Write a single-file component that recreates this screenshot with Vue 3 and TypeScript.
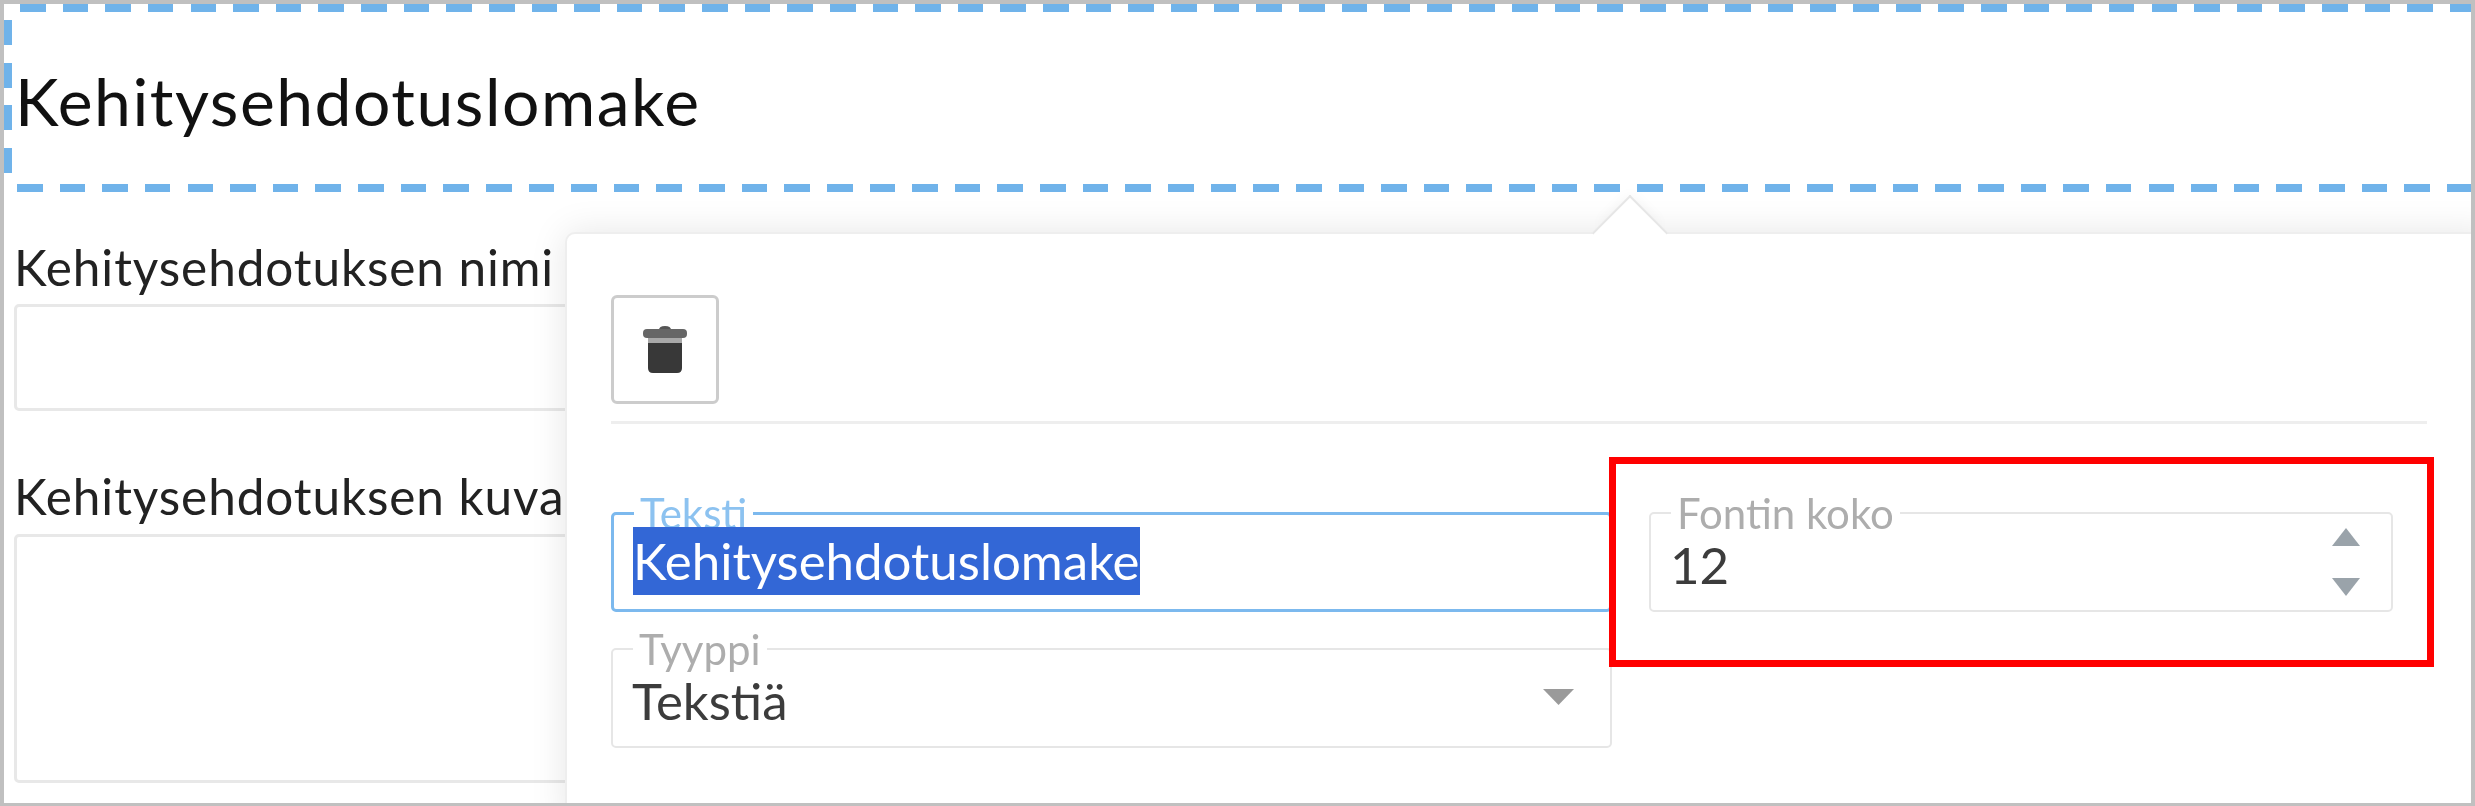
<script setup lang="ts">
const title: string = 'Kehitysehdotuslomake'
</script>

<template>
  <div class="shot">
    <header class="banner"><h1>{{ title }}</h1></header>
    <main class="form">
      <label class="q q-name">Kehitysehdotuksen nimi</label>
      <div class="box box-name"></div>
      <label class="q q-desc">Kehitysehdotuksen kuvaus</label>
      <div class="box box-desc"></div>
    </main>

    <section class="pop">
      <span class="caret"></span>
      <div class="tools">
        <button class="del" type="button" aria-label="Poista">
          <svg width="44" height="47" viewBox="0 0 44 47">
            <path d="M16 4 Q16 0 22 0 Q28 0 28 4 Z" fill="#555" />
            <rect x="0" y="3" width="44" height="9" rx="4" fill="#666" />
            <rect x="5" y="12" width="34" height="6" fill="#a8a8a8" />
            <path d="M5 17 H39 V42 Q39 47 34 47 H10 Q5 47 5 42 Z" fill="#383838" />
          </svg>
        </button>
      </div>
      <div class="fields">
        <fieldset class="fs focus">
          <legend>Teksti</legend>
          <div class="val"><span class="sel">{{ title }}</span></div>
        </fieldset>
        <div class="mark">
          <fieldset class="fs">
            <legend>Fontin koko</legend>
            <div class="val low">
              12
              <svg class="spin" width="28" height="68" viewBox="0 0 28 68">
                <path d="M14 0 L28 18 H0 Z" fill="#9aa3aa" />
                <path d="M0 50 H28 L14 68 Z" fill="#9aa3aa" />
              </svg>
            </div>
          </fieldset>
        </div>
        <fieldset class="fs">
          <legend>Tyyppi</legend>
          <div class="val low">
            Tekstiä
            <svg class="arrow" width="31" height="16" viewBox="0 0 31 16">
              <path d="M0 0 H31 L15.5 16 Z" fill="#9a9a9a" />
            </svg>
          </div>
        </fieldset>
      </div>
    </section>
  </div>
</template>

<style>
html, body { margin: 0; background: #fff; }
</style>

<style scoped>
.shot {
  position: relative;
  box-sizing: border-box;
  width: 2475px;
  height: 806px;
  border: 4px solid #c0c0c0;
  border-bottom-width: 3px;
  overflow: hidden;
  background: #fff;
  font-family: Lato, "Noto Sans", sans-serif;
  color: #111;
}
.banner {
  box-sizing: border-box;
  height: 188px;
  display: flex;
  align-items: center;
  padding: 6px 0 0 11px;
  background:
    repeating-linear-gradient(90deg, #70b3ea 0 25.6px, transparent 25.6px 42.63px) 16px 0 / 100% 8px no-repeat,
    repeating-linear-gradient(90deg, #70b3ea 0 25.6px, transparent 25.6px 42.63px) 13px 100% / 100% 8px no-repeat,
    repeating-linear-gradient(180deg, #70b3ea 0 25px, transparent 25px 42.63px) 0 16px / 8px 154px no-repeat;
}
h1 {
  margin: 0;
  font-size: 66px;
  letter-spacing: 1.5px;
  line-height: 1.2;
  font-weight: 400;
  color: #111;
  filter: blur(0.6px);
}
.form {
  padding: 0 0 0 10px;
}
.q {
  display: block;
  font-size: 49.5px;
  letter-spacing: 0.9px;
  line-height: 50px;
  white-space: nowrap;
  color: #222;
  filter: blur(0.6px);
}
.q-name { margin-top: 50px; }
.q-desc { margin-top: 60px; }
.box {
  box-sizing: border-box;
  width: 700px;
  border: 3px solid #e8e8e8;
  border-radius: 5px;
  margin-top: 12px;
}
.box-name { height: 107px; }
.box-desc { height: 249px; margin-top: 13px; }

.pop {
  position: absolute;
  left: 561px;
  top: 228px;
  right: -20px;
  bottom: -20px;
  padding: 0 98px 0 44px;
  background: #fff;
  border: 2px solid #eee;
  border-radius: 10px 0 0 0;
  box-shadow: 0 0 36px rgba(0, 0, 0, 0.1);
}
.caret {
  position: absolute;
  left: 1036px;
  top: -28px;
  width: 52px;
  height: 52px;
  background: #fff;
  border-top: 2px solid #e6e6e6;
  border-left: 2px solid #e6e6e6;
  transform: rotate(45deg);
  box-shadow: -6px -6px 14px -6px rgba(0, 0, 0, 0.05);
}
.tools {
  padding: 61px 0 17px;
  margin-right: -36px;
  border-bottom: 3px solid #eee;
}
.del {
  box-sizing: border-box;
  width: 108px;
  height: 109px;
  display: flex;
  align-items: center;
  justify-content: center;
  padding: 0;
  background: #fff;
  border: 3px solid #ccc;
  border-radius: 6px;
  filter: blur(0.6px);
}
.fields {
  display: grid;
  grid-template-columns: 1001px 1fr;
  column-gap: 37px;
  row-gap: 37px;
  margin-top: 89px;
  position: relative;
}
.fs {
  box-sizing: border-box;
  min-width: 0;
  height: 120px;
  margin: -21px 0 0;
  padding: 0 19px;
  border: 2px solid #e6e6e6;
  border-radius: 5px;
}
.fs legend {
  padding: 0 6px;
  margin-left: 1px;
  font-size: 42px;
  line-height: 42px;
  height: 42px;
  color: #adadad;
  filter: blur(0.6px);
}
.fs.focus {
  border: 3px solid #7cb9ee;
}
.fs.focus legend {
  color: #8cc2f0;
}
.val {
  position: relative;
  font-size: 51px;
  line-height: 68px;
  margin-top: -7px;
  color: #3c3c3c;
  white-space: nowrap;
  filter: blur(0.6px);
}
.val.low {
  margin-top: -3px;
}
.sel {
  display: inline-block;
  background: #3367d6;
  color: #fff;
}
.mark {
  position: relative;
}
.mark .fs {
  width: 744px;
}
.mark::after {
  content: "";
  position: absolute;
  left: -40px;
  top: -56px;
  width: 811px;
  height: 196px;
  border: 7px solid #f00;
  pointer-events: none;
}
.spin {
  position: absolute;
  right: 12px;
  top: -3px;
}
.arrow {
  position: absolute;
  right: 17px;
  top: 22px;
}
</style>
